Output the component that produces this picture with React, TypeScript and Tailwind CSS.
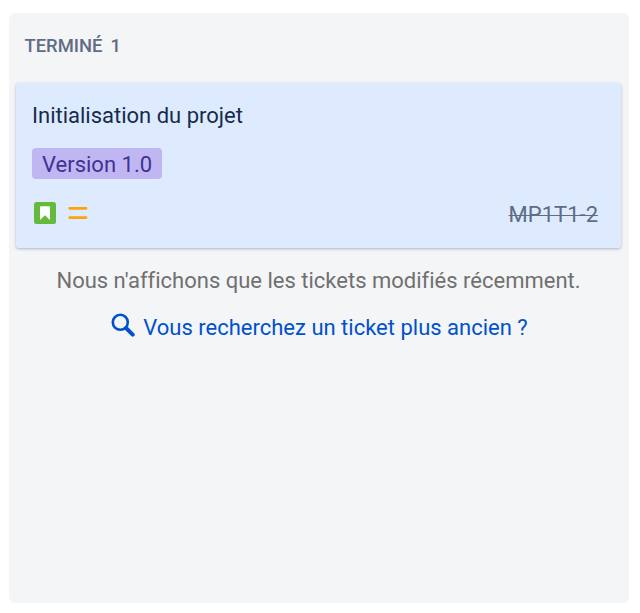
export default function App() {
  return (
    <main className="h-[613px] w-[640px] overflow-hidden bg-white pl-[9px] pt-[13px] font-['Roboto',sans-serif] [font-variant-ligatures:none]">
      <section className="h-[590px] w-[620px] rounded-md bg-[#f4f5f7] pl-[7px] pr-[8px]">
        <h2 className="flex h-[70px] gap-2 pl-[8.5px] pt-[23px] text-[18.4px] font-medium leading-5 text-[#5e6c84]">
          <span>TERMINÉ</span>
          <span>1</span>
        </h2>
        <article className="flex h-[165px] flex-col items-start rounded-[3px] bg-[#deebff] pl-4 pr-[15px] pt-[19px] shadow-[0_1px_3px_rgba(9,30,66,0.3)]">
          <h3 className="text-[22px] leading-7 text-[#172b4d]">Initialisation du projet</h3>
          <span className="mt-[18px] h-[31px] rounded bg-[#c0b6f2] px-[10px] text-[22px] leading-[33px] text-[#403294]">Version 1.0</span>
          <div className="mt-5 flex h-7 w-full items-center pl-[2px] pr-2">
            <svg className="h-[22px] w-[22px]" viewBox="0 0 22 22">
              <rect width="22" height="22" rx="2.5" fill="#63ba3c" />
              <path d="M7 4.3h8q1 0 1 1V17.9L11 13.2 6 17.9V5.3q0-1 1-1z" fill="white" />
            </svg>
            <svg className="ml-3 h-[22px] w-5" viewBox="0 0 20 22">
              <path d="M1.7 6.3h16.3M1.7 15.6h16.3" stroke="#ffa30a" strokeWidth="2.8" strokeLinecap="round" />
            </svg>
            <span className="ml-auto pt-[3px] text-[22px] leading-7 text-[#5e6c84] line-through decoration-1">MP1T1-2</span>
          </div>
        </article>
        <p className="mt-[19px] text-center text-[22px] leading-7 text-[#707070]">Nous n'affichons que les tickets modifiés récemment.</p>
        <a className="mt-[19px] flex justify-center pl-[2px] text-[22px] leading-7 text-[#0052cc]">
          <svg className="-mt-px mr-2 h-6 w-6" viewBox="0 0 24 24" fill="none" stroke="currentColor">
            <circle cx="9.3" cy="9.3" r="7.5" strokeWidth="2.6" />
            <path d="m15 15 6.7 6.7" strokeWidth="4" strokeLinecap="round" />
          </svg>
          <span>Vous recherchez un ticket plus ancien ?</span>
        </a>
      </section>
    </main>
  );
}
